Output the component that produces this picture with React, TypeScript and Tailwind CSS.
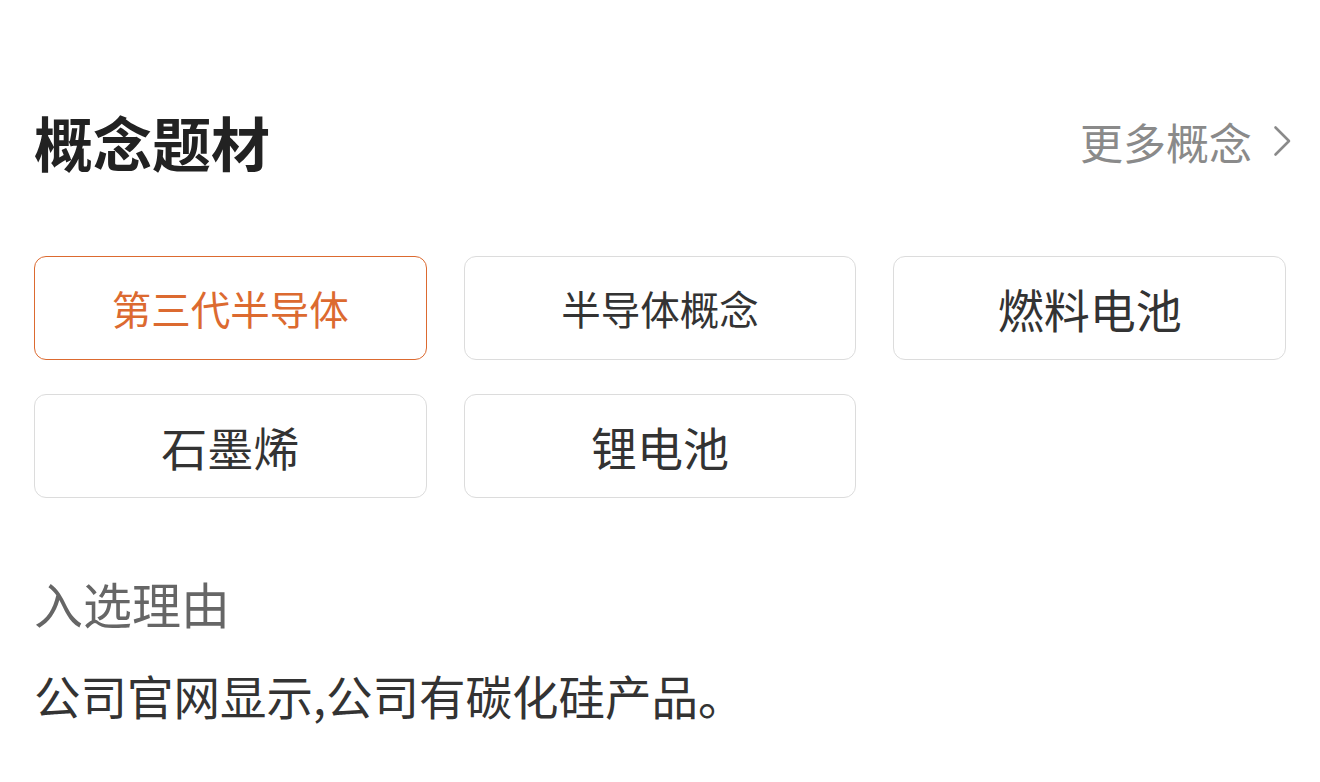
const tags = [
    { name: '第三代半导体', active: true },
    { name: '半导体概念', active: false },
    { name: '燃料电池', active: false },
    { name: '石墨烯', active: false },
    { name: '锂电池', active: false },
];

export default function App() {
    return (
        <div
            className="w-[1320px] h-[782px] bg-white px-[34px] pt-[106px]"
            style={{ fontFamily: '"Noto Sans CJK SC", "Noto Sans", sans-serif' }}
        >
            <header className="flex items-center justify-between h-[70px]">
                <h1 className="text-[59px] leading-none font-bold text-[#222222]">概念题材</h1>
                <div className="flex items-center text-[43px] leading-none text-[#8a8a8a] mr-[-6px]">
                    <span>更多概念</span>
                    <svg className="ml-[21px]" width="19" height="32" viewBox="0 0 19 32" fill="none">
                        <polyline points="2.5,2.5 16,16 2.5,29.5" stroke="#8a8a8a" strokeWidth="2.6" strokeLinecap="round" strokeLinejoin="round" />
                    </svg>
                </div>
            </header>

            <div className="grid grid-cols-3 gap-x-[37px] gap-y-[34px] mt-[80px]">
                {tags.map(tag => (
                    <div
                        key={tag.name}
                        className={`h-[104px] flex items-center justify-center rounded-[12px] border-[1.5px] leading-none ${
                            tag.active
                                ? 'border-[#dc6a30] text-[#dc6a30]'
                                : 'border-[#dcdcdc] text-[#333333]'
                        } ${tag.name.length > 4 ? 'text-[39.5px]' : 'text-[46px]'}`}
                    >
                        {tag.name}
                    </div>
                ))}
            </div>

            <h3 className="mt-[80px] text-[49px] leading-none text-[#666666]">入选理由</h3>
            <p className="mt-[45px] text-[46.5px] leading-none text-[#333333]">公司官网显示,公司有碳化硅产品。</p>
        </div>
    )
}
